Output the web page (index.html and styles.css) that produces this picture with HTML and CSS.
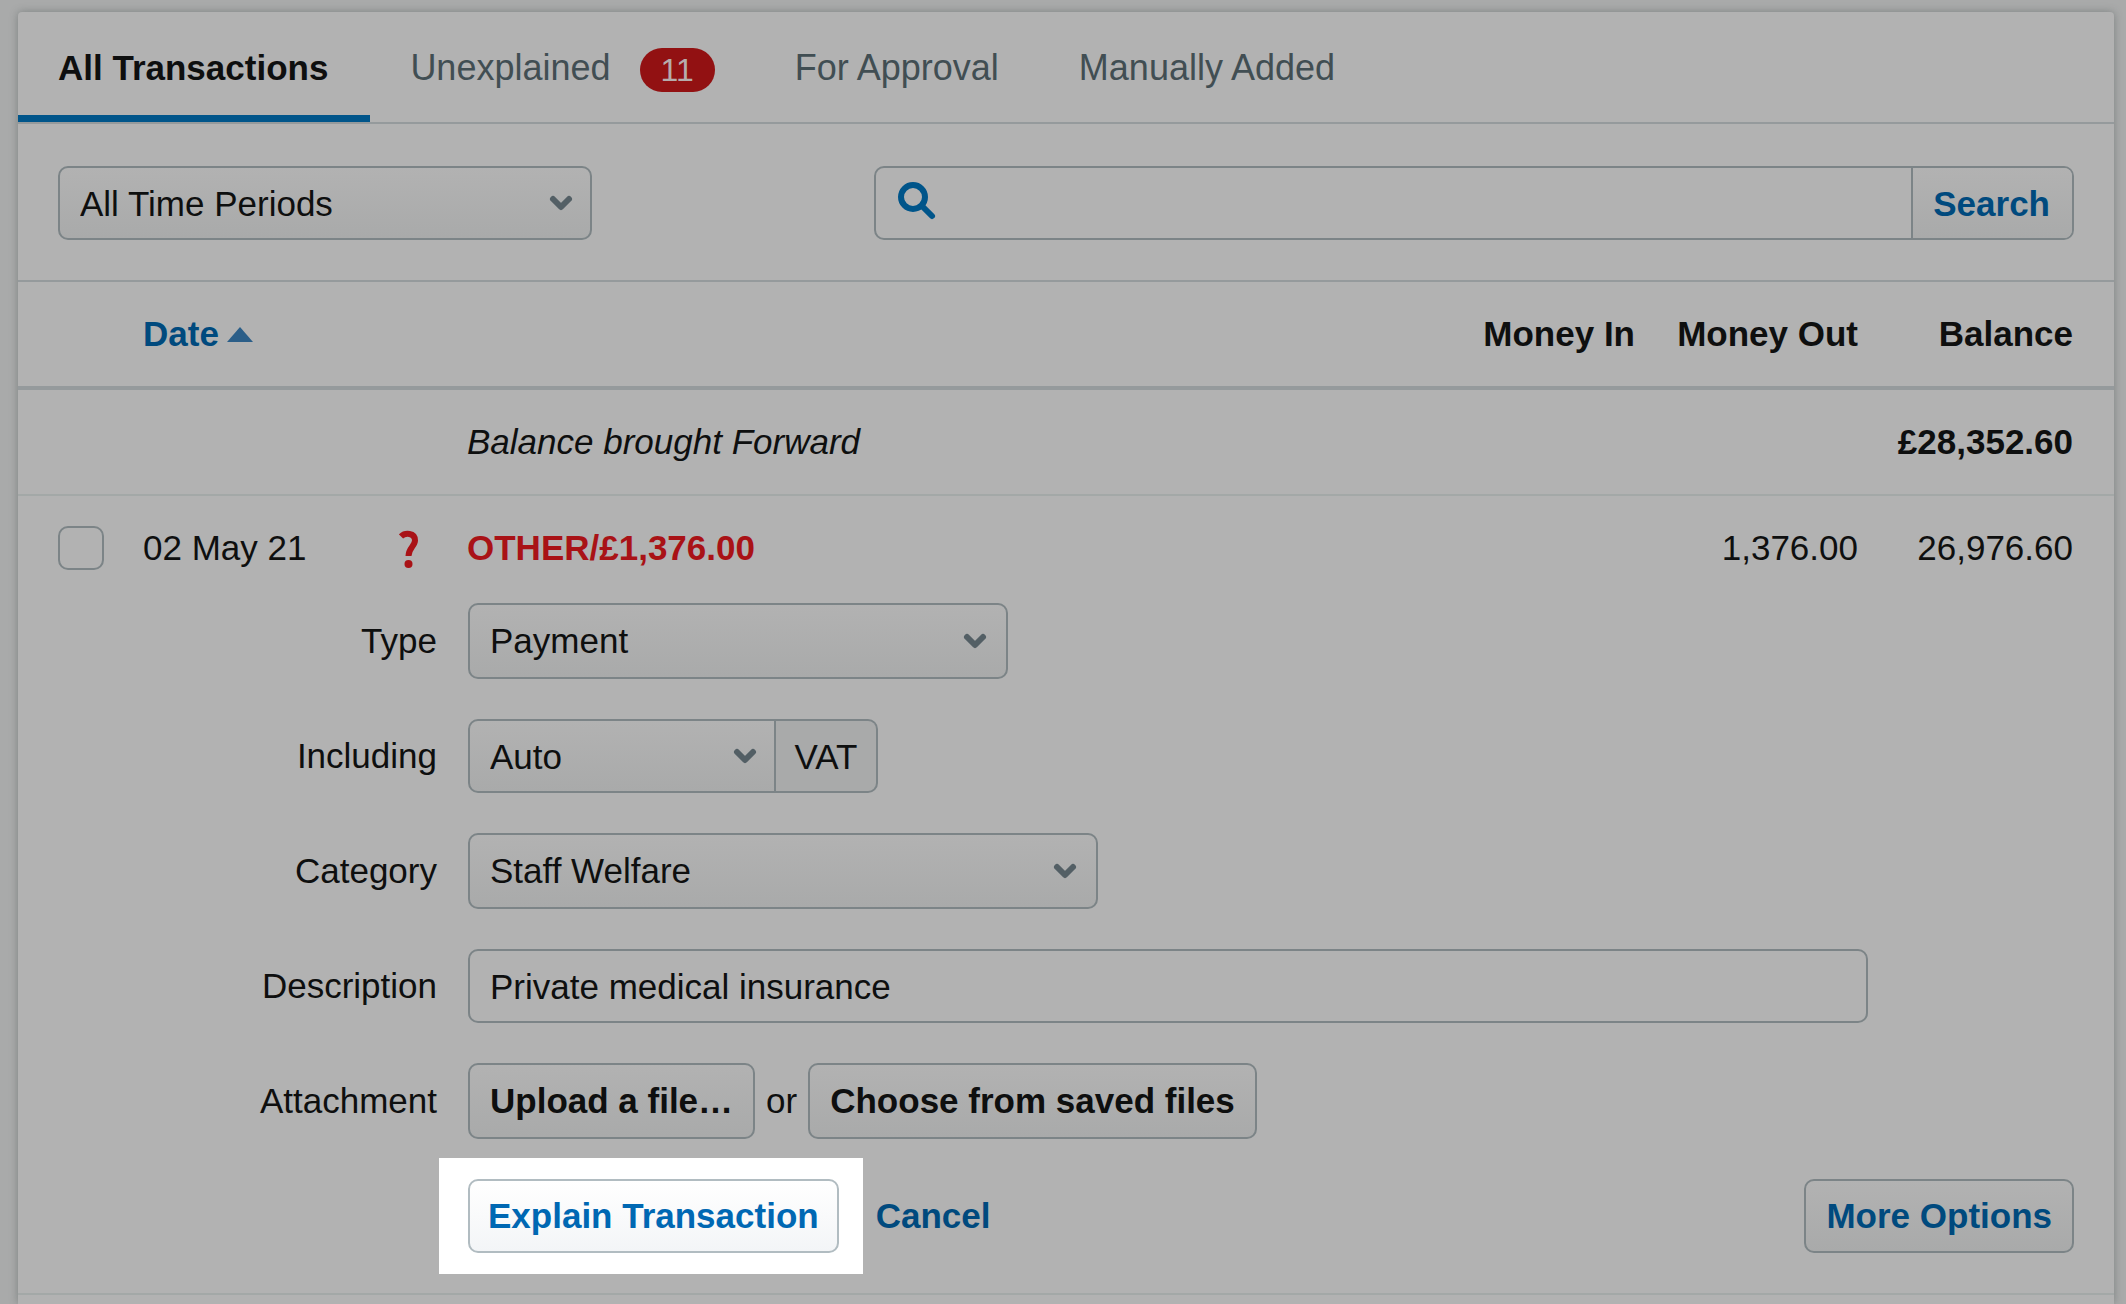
FILE: index.html
```html
<!DOCTYPE html>
<html lang="en">
<head>
<meta charset="utf-8">
<title>Bank transactions</title>
<link rel="stylesheet" href="styles.css">
</head>
<body>
<main class="card">
  <nav class="tabs" aria-label="Transaction lists">
    <a class="tab tab-active" href="#all">All Transactions</a>
    <a class="tab" href="#unexplained">Unexplained <span class="badge">11</span></a>
    <a class="tab" href="#approval">For Approval</a>
    <a class="tab" href="#manual">Manually Added</a>
  </nav>

  <div class="filters">
    <span class="select-wrap select-period">
      <select class="field select" aria-label="Time period"><option>All Time Periods</option></select>
      <svg class="chevron" viewBox="0 0 22 14" aria-hidden="true"><path d="M3 3l8 8 8-8"/></svg>
    </span>
    <form class="search">
      <svg class="search-icon" viewBox="0 0 40 40" aria-hidden="true"><circle cx="16" cy="16" r="12"/><path d="M25 25l10 10"/></svg>
      <input class="search-input" type="text" aria-label="Search transactions">
      <button class="search-button" type="button">Search</button>
    </form>
  </div>

  <table class="transactions">
    <colgroup>
      <col class="col-check"><col class="col-date"><col class="col-status"><col><col class="col-in"><col class="col-out"><col class="col-balance">
    </colgroup>
    <thead>
      <tr>
        <th></th>
        <th colspan="2"><a class="sort" href="#sort-date">Date <svg class="sort-arrow" viewBox="0 0 26 15" aria-hidden="true"><path d="M13 0l13 15H0z"/></svg></a></th>
        <th></th>
        <th class="amount">Money In</th>
        <th class="amount">Money Out</th>
        <th class="amount balance">Balance</th>
      </tr>
    </thead>
    <tbody>
      <tr class="opening">
        <td></td><td></td><td></td>
        <td><em>Balance brought Forward</em></td>
        <td></td><td></td>
        <td class="amount balance"><strong>£28,352.60</strong></td>
      </tr>
      <tr>
        <td class="check-cell"><input class="check" type="checkbox" aria-label="Select transaction"></td>
        <td>02 May 21</td>
        <td><svg class="status-icon" viewBox="0 0 20 40" role="img" aria-label="Unexplained"><path d="M2 8.500C6 4.500 16 4.500 16 12.500C16 18 9.500 20 9.500 28"/><circle cx="9.500" cy="36" r="4"/></svg></td>
        <td><strong class="unexplained">OTHER/£1,376.00</strong></td>
        <td></td>
        <td class="amount">1,376.00</td>
        <td class="amount balance">26,976.60</td>
      </tr>
      <tr class="detail">
        <td colspan="7">
          <form class="explain">
            <label class="label" for="type">Type</label>
            <span class="select-wrap select-type">
              <select class="field field-tall select" id="type"><option>Payment</option></select>
              <svg class="chevron" viewBox="0 0 22 14" aria-hidden="true"><path d="M3 3l8 8 8-8"/></svg>
            </span>

            <label class="label" for="vat">Including</label>
            <div class="controls">
              <span class="select-wrap select-vat">
                <select class="field select joined" id="vat"><option>Auto</option></select>
                <svg class="chevron" viewBox="0 0 22 14" aria-hidden="true"><path d="M3 3l8 8 8-8"/></svg>
              </span>
              <span class="addon">VAT</span>
            </div>

            <label class="label" for="category">Category</label>
            <span class="select-wrap select-category">
              <select class="field field-tall select" id="category"><option>Staff Welfare</option></select>
              <svg class="chevron" viewBox="0 0 22 14" aria-hidden="true"><path d="M3 3l8 8 8-8"/></svg>
            </span>

            <label class="label" for="description">Description</label>
            <input class="field description" id="description" type="text" value="Private medical insurance">

            <label class="label" for="upload">Attachment</label>
            <div class="controls attachment">
              <button class="button field-tall" id="upload" type="button">Upload a file…</button>
              <span>or</span>
              <button class="button field-tall" type="button">Choose from saved files</button>
            </div>

            <div class="controls actions">
              <div class="spotlight"><button class="button button-bright" type="button">Explain Transaction</button></div>
              <a class="cancel" href="#cancel">Cancel</a>
              <button class="button button-blue more" type="button">More Options</button>
            </div>
          </form>
        </td>
      </tr>
    </tbody>
  </table>
</main>
</body>
</html>
```
FILE: styles.css
```css
:root {
  --surface: #b2b2b2;
  --shade: #a9aaaa;
  --ink: #0e0f0f;
  --muted: #414e53;
  --blue: #004a7e;
  --bar: #00558a;
  --red: #a91216;
  --edge: #7c8487;
  --rule: #959a9c;
  --rule-light: #a3a8a7;
}

* { box-sizing: border-box; }

body {
  margin: 0;
  min-height: 100vh;
  display: flex;
  padding: 12px 12px 0 18px;
  background: #a9aaaa;
  color: var(--ink);
  font: 35px/40px "Liberation Sans", Arial, sans-serif;
}

a { text-decoration: none; }

button, input, select {
  margin: 0;
  font: inherit;
  color: inherit;
}

.card {
  flex: 1;
  min-width: 0;
  background: var(--surface);
  border-radius: 4px 4px 0 0;
  box-shadow: 0 0 8px rgba(60, 70, 68, 0.4);
}

.tabs {
  display: flex;
  border-bottom: 2px solid var(--rule);
}

.tab {
  display: flex;
  align-items: center;
  gap: 29px;
  height: 110px;
  padding: 2px 40px 0;
  color: var(--muted);
  font-size: 36px;
  white-space: nowrap;
}

.tab-active {
  padding-right: 42px;
  color: var(--ink);
  font-size: 35px;
  font-weight: bold;
  box-shadow: inset 0 -7px var(--bar);
}

.badge {
  margin-top: 4px;
  padding: 0 21px;
  border-radius: 22px;
  background: #921112;
  color: #b6acac;
  font-size: 32px;
  line-height: 44px;
}

.filters {
  display: flex;
  justify-content: space-between;
  gap: 40px;
  padding: 42px 40px 40px;
  border-bottom: 2px solid var(--rule);
}

.field {
  height: 74px;
  width: 100%;
  padding: 2px 20px 0;
  border: 2px solid var(--edge);
  border-radius: 10px;
  background: var(--surface);
}

.select {
  appearance: none;
  background: linear-gradient(#b2b2b2, #a9aaaa);
}

.field-tall {
  height: 76px;
  padding-top: 0;
}

.select-wrap {
  display: inline-grid;
  align-items: center;
}

.select-wrap > * { grid-area: 1 / 1; }

.chevron {
  justify-self: end;
  width: 22px;
  height: 14px;
  margin-right: 20px;
  overflow: visible;
  pointer-events: none;
  fill: none;
  stroke: #535f65;
  stroke-width: 6;
  stroke-linecap: round;
  stroke-linejoin: round;
}

.field-tall + .chevron { margin-right: 22px; }

.select-period { width: 534px; }
.select-type { width: 540px; }
.select-vat { width: 308px; }
.select-category { width: 630px; }

.search {
  display: flex;
  flex: 0 1 1200px;
  height: 74px;
  border: 2px solid var(--edge);
  border-radius: 10px;
  overflow: hidden;
}

.search-icon {
  width: 40px;
  height: 40px;
  margin: 13px 0 0 21px;
  fill: none;
  stroke: var(--bar);
  stroke-width: 6;
  stroke-linecap: round;
}

.search-input {
  flex: 1;
  min-width: 0;
  padding: 0 20px;
  border: 0;
  background: none;
}

.search-button {
  padding: 2px 22px 0 20px;
  border: 0;
  border-left: 2px solid var(--edge);
  background: linear-gradient(#b2b2b2, #a9aaaa);
  color: var(--blue);
  font-weight: bold;
}

.transactions {
  width: 100%;
  table-layout: fixed;
  border-spacing: 0;
}

.transactions th,
.transactions td {
  height: 104px;
  padding: 0;
  text-align: left;
  white-space: nowrap;
}

.transactions thead th {
  height: 108px;
  border-bottom: 4px solid var(--rule);
}

.transactions .opening td {
  height: 106px;
  border-bottom: 2px solid var(--rule-light);
}

.col-check { width: 125px; }
.col-date { width: 256px; }
.col-status { width: 68px; }
.col-in { width: 200px; }
.col-out { width: 223px; }
.col-balance { width: 256px; }

.transactions .amount { text-align: right; }
.transactions .balance { padding-right: 41px; }
.transactions .check-cell { padding-left: 40px; }

.sort {
  display: flex;
  align-items: center;
  gap: 8px;
  color: var(--blue);
}

.sort-arrow {
  width: 26px;
  height: 15px;
  fill: #2b5e88;
}

.check {
  display: block;
  appearance: none;
  width: 46px;
  height: 44px;
  border: 2px solid var(--edge);
  border-radius: 10px;
}

.status-icon {
  display: block;
  width: 20px;
  height: 40px;
  fill: none;
  stroke: var(--red);
  stroke-width: 6;
}

.status-icon circle {
  fill: var(--red);
  stroke: none;
}

.unexplained { color: var(--red); }

.transactions .detail td {
  height: auto;
  padding: 3px 40px 19px 0;
  border-bottom: 2px solid var(--rule-light);
}

.explain {
  display: grid;
  grid-template-columns: 419px 1fr;
  gap: 40px 31px;
  align-items: center;
}

.label { text-align: right; }

.controls {
  display: flex;
  align-items: center;
}

.joined { border-radius: 10px 0 0 10px; }

.addon {
  width: 102px;
  height: 74px;
  border: 2px solid var(--edge);
  border-left: 0;
  border-radius: 0 10px 10px 0;
  background: var(--shade);
  line-height: 72px;
  text-align: center;
}

.explain .description { width: calc(100% - 206px); }

.attachment { gap: 11px; }

.button {
  height: 74px;
  padding: 0 20px;
  border: 2px solid var(--edge);
  border-radius: 10px;
  background: linear-gradient(#b2b2b2, #a9aaaa);
  font-weight: bold;
}

.button.field-tall { height: 76px; }

.button-blue { color: var(--blue); }

.button-bright {
  padding: 0 18px;
  border-color: #b1bcc1;
  background: linear-gradient(#ffffff, #f3f5f7);
  color: #0068b3;
}

.actions {
  grid-column: 1 / -1;
  margin: -21px 0 0 421px;
}

.spotlight {
  padding: 21px 24px 21px 29px;
  background: #ffffff;
}

.cancel {
  margin-left: 13px;
  color: var(--blue);
  font-weight: bold;
}

.more { margin-left: auto; }
```
